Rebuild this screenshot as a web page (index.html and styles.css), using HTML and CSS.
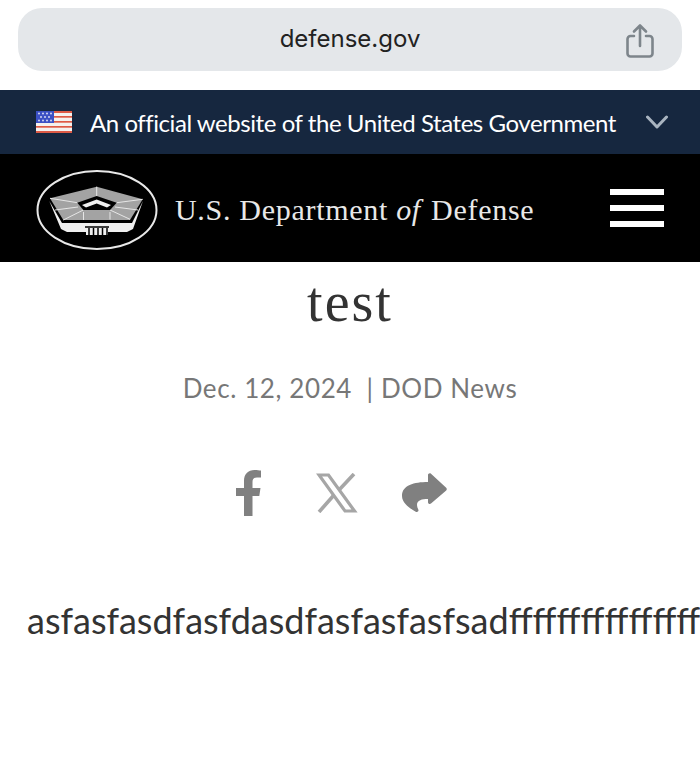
FILE: index.html
```html
<!DOCTYPE html>
<html lang="en">
<head>
    <meta charset="UTF-8">
    <meta name="viewport" content="width=device-width, initial-scale=1.0">
    <title>test</title>
    <link rel="stylesheet" href="styles.css">
</head>
<body>
    <div class="browser-bar">
        <div class="url-pill">
            <span class="url-text">defense.gov</span>
            <svg class="share-icon" width="32" height="38" viewBox="0 0 32 38" fill="none" stroke="#7d858b" stroke-width="2.6" stroke-linecap="round" stroke-linejoin="round">
                <path d="M10 14H6.5a3 3 0 0 0-3 3v14.5a3 3 0 0 0 3 3h19a3 3 0 0 0 3-3V17a3 3 0 0 0-3-3H22"/>
                <path d="M16 24V4M10 9.5 16 3.5l6 6"/>
            </svg>
        </div>
    </div>

    <div class="gov-banner">
        <svg class="flag" width="36" height="22" viewBox="0 0 36 22">
            <rect width="36" height="22" fill="#f4f1ee"/>
            <rect y="0" width="36" height="2" fill="#de5a45"/>
            <rect y="5" width="36" height="1.7" fill="#de5a45"/>
            <rect y="10" width="36" height="1.7" fill="#de5a45"/>
            <rect y="15" width="36" height="1.7" fill="#de5a45"/>
            <rect y="20" width="36" height="2" fill="#de5a45"/>
            <rect width="18" height="12" fill="#3b50c4"/>
            <g fill="#e4e6f5">
                <circle cx="3" cy="2.5" r=".9"/><circle cx="7" cy="2.5" r=".9"/><circle cx="11" cy="2.5" r=".9"/><circle cx="15" cy="2.5" r=".9"/>
                <circle cx="5" cy="6" r=".9"/><circle cx="9" cy="6" r=".9"/><circle cx="13" cy="6" r=".9"/>
                <circle cx="3" cy="9.5" r=".9"/><circle cx="7" cy="9.5" r=".9"/><circle cx="11" cy="9.5" r=".9"/><circle cx="15" cy="9.5" r=".9"/>
            </g>
        </svg>
        <span class="gov-text">An official website of the United States Government</span>
        <svg class="chevron" width="22" height="14" viewBox="0 0 22 14" fill="none" stroke="#a9b4c0" stroke-width="3" stroke-linecap="round" stroke-linejoin="round">
            <path d="M1.5 2 11 12 20.500 2"/>
        </svg>
    </div>

    <header class="site-header">
        <div class="brand">
            <svg class="seal" width="122" height="82" viewBox="0 0 122 82">
                <ellipse cx="61" cy="41" rx="59.500" ry="39" fill="#000" stroke="#e8e8e8" stroke-width="2"/>
                <!-- roof -->
                <path d="M60.700 17.700 14 29.300 27.300 51H94L106.700 30.300Z" fill="#a3a3a3"/>
                <path d="M60.700 17.700 60.700 27M14 29.300 41.300 33.700M106.700 30.300 80.700 33.700M27.300 51 47.300 41M94 50.300 74 41M47.500 43V51M74 43V50.500M19 41 42 38M102 41 79 38" stroke="#e6e6e6" stroke-width="1" fill="none"/>
                <!-- court -->
                <path d="M41.300 33.700 60.700 27 80.700 33.700 74 41H47.300Z" fill="#000"/>
                <path d="M46 36 60.700 30.500 75 36 71 38.500 60.700 34.500 50 38.500Z" fill="#f0f0f0"/>
                <!-- walls and steps -->
                <path d="M13.300 32 26 54H96L107 32 97 60 91 63H31L25 60Z" fill="#f0f0f0"/>
                <rect x="50" y="58" width="22" height="8" fill="#f0f0f0"/>
                <path d="M49 58H73" stroke="#000" stroke-width="1.500"/>
                <path d="M53 59V66M57.500 59V66M62 59V66M66.500 59V66M71 59V66" stroke="#000" stroke-width="1.500"/>
            </svg>
            <span class="brand-name">U.S. Department <i class="brand-of">of</i> Defense</span>
        </div>
        <div class="hamburger">
            <span class="hamburger-line"></span>
            <span class="hamburger-line"></span>
            <span class="hamburger-line"></span>
        </div>
    </header>

    <main class="article">
        <h1 class="article-title">test</h1>
        <div class="article-meta">Dec. 12, 2024 &nbsp;| DOD News</div>
        <div class="share-row">
            <svg class="share-fb" width="26" height="46" viewBox="0 0 26 46" fill="#808080">
                <path d="M8 46V26H0v-8h8v-7C8 4 12 0 18.500 0c2.500 0 5 .3 6.500.6v6.900h-4c-3.500 0-4.500 1.800-4.500 4.500v6h8l-1.200 8h-6.800v20Z"/>
            </svg>
            <svg width="42" height="40" viewBox="0 0 42 40" fill="none" stroke="#a6a6a6" stroke-width="3.200">
                <path d="M3 2H12.500L38.500 38H29Z"/>
                <path d="M38 1 23 17M18 22 3 39" stroke-width="3.600"/>
            </svg>
            <svg width="45" height="40" viewBox="0 0 45 40" fill="#808080">
                <path d="M26 2c0-1.600 1.900-2.400 3-1.300l15.200 14c.8.800.8 2 0 2.800L29 30.500c-1.100 1-3 .3-3-1.300V26c-6 0-11 1-11 6 0 1.500.5 3 1.300 4.500.8 1.700-1 3.200-2.600 2.200C8 35.500 0 30 0 23 0 12 12 9 26 9Z"/>
            </svg>
        </div>
        <p class="article-body">asfasfasdfasfdasdfasfasfasfsadffffffffffffffffffffffffffffffff</p>
    </main>
</body>
</html>
```

FILE: styles.css
```css
html, body {
    margin: 0;
    padding: 0;
}
body {
    width: 700px;
    height: 783px;
    overflow: hidden;
    background: #fff;
    font-family: Lato, "Liberation Sans", sans-serif;
}
.browser-bar {
    height: 90px;
    padding: 8px 18px 0;
    box-sizing: border-box;
}
.url-pill {
    height: 63px;
    border-radius: 24px;
    background: #e4e7ea;
    display: flex;
    align-items: center;
    justify-content: center;
    position: relative;
}
.url-text {
    font-family: Inter, "Liberation Sans", sans-serif;
    font-size: 24px;
    color: #222;
    margin-bottom: 3px;
}
.share-icon {
    position: absolute;
    right: 26px;
    top: 14px;
}
.gov-banner {
    height: 64px;
    background: #16273f;
    display: flex;
    align-items: center;
    padding: 0 32px 0 36px;
    color: #fff;
}
.flag {
    flex: none;
    margin-right: 18px;
}
.gov-text {
    font-size: 24px;
    white-space: nowrap;
    letter-spacing: -0.44px;
    flex: 1;
}
.site-header {
    height: 108px;
    background: #000;
    display: flex;
    align-items: center;
    justify-content: space-between;
    padding: 0 36px;
}
.brand {
    display: flex;
    align-items: center;
    gap: 17px;
    margin-top: 4px;
}
.brand-name {
    font-family: "Liberation Serif", serif;
    font-size: 30px;
    letter-spacing: 0.7px;
    color: #e8e8e8;
    white-space: nowrap;
}
.brand-of {
    margin-right: 2px;
}
.hamburger {
    display: flex;
    flex-direction: column;
    gap: 10px;
}
.hamburger-line {
    width: 54px;
    height: 6px;
    background: #fff;
}
.article {
    display: flex;
    flex-direction: column;
    align-items: center;
}
.article-title {
    margin: 10px 0 0;
    font-family: "Liberation Serif", serif;
    font-weight: normal;
    font-size: 56px;
    line-height: 60px;
    letter-spacing: 2px;
    color: #333;
}
.article-meta {
    margin-top: 40px;
    font-size: 26px;
    letter-spacing: 0.6px;
    color: #777;
}
.share-row {
    margin: 66px 18px 0 0;
    display: flex;
    align-items: center;
    gap: 44px;
}
.share-fb {
    margin-right: 10px;
}
.article-body {
    margin: 82px 0 0 27px;
    align-self: flex-start;
    font-size: 36px;
    color: #333;
    white-space: nowrap;
}
```
